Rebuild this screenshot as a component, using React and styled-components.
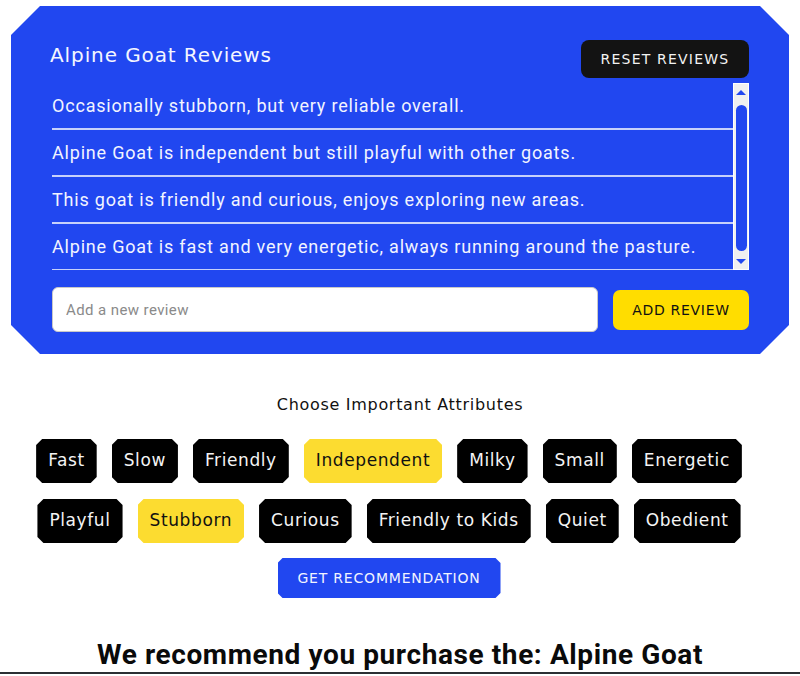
import React, { useState } from 'react';
import styled, { createGlobalStyle, css } from 'styled-components';

const GlobalStyle = createGlobalStyle`
  html, body {
    margin: 0;
    padding: 0;
    background: #fff;
  }
  body {
    font-family: Roboto, "Liberation Sans", sans-serif;
  }
`;

const blue = '#2147f0';
const pixelFont = `"DejaVu Sans", "Liberation Sans", sans-serif`;

const chamfer = (n) => css`
  clip-path: polygon(
    ${n}px 0, calc(100% - ${n}px) 0, 100% ${n}px, 100% calc(100% - ${n}px),
    calc(100% - ${n}px) 100%, ${n}px 100%, 0 calc(100% - ${n}px), 0 ${n}px
  );
`;

const Page = styled.div`
  width: 800px;
  padding-top: 6px;
`;

const Panel = styled.section`
  margin: 0 11px;
  background: ${blue};
  padding: 34px 40px 22px 41px;
  ${chamfer(29)}
`;

const PanelHeader = styled.header`
  display: flex;
  justify-content: space-between;
  align-items: center;
  height: 38px;
`;

const PanelTitle = styled.h2`
  margin: -8px 0 0 -2px;
  font-family: ${pixelFont};
  font-size: 20px;
  font-weight: 400;
  letter-spacing: 0.9px;
  color: #f4f6ff;
`;

const DarkButton = styled.button`
  height: 38px;
  width: 168px;
  border: none;
  border-radius: 8px;
  background: #131313;
  color: #f2f2f2;
  font-family: ${pixelFont};
  font-size: 14px;
  letter-spacing: 1.2px;
  cursor: pointer;
`;

const ListFrame = styled.div`
  display: flex;
  height: 187px;
  margin-top: 5px;
  overflow: hidden;
`;

const ReviewList = styled.ul`
  flex: 1;
  list-style: none;
  margin: 0;
  padding: 0;
  overflow: hidden;
`;

const ReviewItem = styled.li`
  padding: 11px 0;
  line-height: 23px;
  font-size: 18px;
  letter-spacing: 0.8px;
  color: #f2f4ff;
  border-bottom: 2px solid rgba(255, 255, 255, 0.75);
  white-space: nowrap;
`;

const ScrollBar = styled.div`
  width: 16px;
  box-sizing: border-box;
  display: flex;
  flex-direction: column;
  align-items: center;
  background: #f0f0f0;
  border: 1px solid #fff;
  padding: 6px 0 5px;
  gap: 6px;
`;

const Arrow = styled.span`
  width: 0;
  height: 0;
  border-left: 5px solid transparent;
  border-right: 5px solid transparent;
  ${({ $down }) =>
    $down ? `border-top: 5px solid ${blue};` : `border-bottom: 5px solid ${blue};`}
`;

const Thumb = styled.div`
  flex: 1;
  width: 11px;
  margin: 4px 0 2px;
  border-radius: 6px;
  background: ${blue};
`;

const AddRow = styled.div`
  display: flex;
  align-items: center;
  gap: 15px;
  margin-top: 17px;
`;

const ReviewInput = styled.input`
  flex: 1;
  height: 45px;
  box-sizing: border-box;
  border: 1px solid #c8c8c8;
  border-radius: 6px;
  padding: 0 13px;
  font-family: Roboto, "Liberation Sans", sans-serif;
  font-size: 15px;
  letter-spacing: 0.4px;
  color: #222;
  outline: none;
  &::placeholder {
    color: #8a8a8a;
  }
`;

const YellowButton = styled.button`
  width: 136px;
  height: 40px;
  border: none;
  border-radius: 7px;
  background: #ffdd00;
  color: #111;
  font-family: ${pixelFont};
  font-size: 14px;
  letter-spacing: 0.7px;
  cursor: pointer;
`;

const Attributes = styled.section`
  display: flex;
  flex-direction: column;
  align-items: center;
  margin-top: 41px;
`;

const AttributesLabel = styled.p`
  margin: 0;
  font-family: ${pixelFont};
  font-size: 16px;
  line-height: 20px;
  letter-spacing: 0.7px;
  color: #111;
`;

const ChipGroup = styled.div`
  display: flex;
  flex-direction: column;
  align-items: center;
  padding-right: 22px;
`;

const Chips = styled.div`
  display: flex;
  flex-wrap: wrap;
  justify-content: center;
  gap: 16px 15px;
  width: 760px;
  margin-top: 24px;
`;

const Chip = styled.button`
  height: 44px;
  padding: 0 12px 2px;
  border: none;
  background: ${({ $active }) => ($active ? '#fcdc30' : '#000')};
  color: ${({ $active }) => ($active ? '#111' : '#f4f4f4')};
  font-family: ${pixelFont};
  font-size: 17px;
  letter-spacing: 0.6px;
  cursor: pointer;
  ${chamfer(6)}
`;

const BlueButton = styled.button`
  margin-top: 15px;
  height: 40px;
  width: 223px;
  border: none;
  background: ${blue};
  color: #f2f4ff;
  font-family: ${pixelFont};
  font-size: 14px;
  letter-spacing: 0.8px;
  cursor: pointer;
  ${chamfer(5)}
`;

const Result = styled.h1`
  margin: 40px 0 0;
  text-align: center;
  font-family: Roboto, "Liberation Sans", sans-serif;
  font-size: 28px;
  font-weight: 700;
  line-height: 34px;
  letter-spacing: 0.6px;
  color: #0a0a0a;
`;

const Divider = styled.hr`
  margin: 0;
  border: none;
  border-top: 2px solid #2b2f33;
`;

const initialReviews = [
  'Occasionally stubborn, but very reliable overall.',
  'Alpine Goat is independent but still playful with other goats.',
  'This goat is friendly and curious, enjoys exploring new areas.',
  'Alpine Goat is fast and very energetic, always running around the pasture.',
];

const attributes = [
  'Fast', 'Slow', 'Friendly', 'Independent', 'Milky', 'Small', 'Energetic',
  'Playful', 'Stubborn', 'Curious', 'Friendly to Kids', 'Quiet', 'Obedient',
];

export default function App() {
  const [reviews, setReviews] = useState(initialReviews);
  const [draft, setDraft] = useState('');
  const [picked, setPicked] = useState(['Independent', 'Stubborn']);

  const toggle = (name) =>
    setPicked((p) => (p.includes(name) ? p.filter((x) => x !== name) : [...p, name]));

  const addReview = () => {
    if (!draft.trim()) return;
    setReviews([draft.trim(), ...reviews]);
    setDraft('');
  };

  return (
    <Page>
      <GlobalStyle />
      <Panel>
        <PanelHeader>
          <PanelTitle>Alpine Goat Reviews</PanelTitle>
          <DarkButton onClick={() => setReviews(initialReviews)}>RESET REVIEWS</DarkButton>
        </PanelHeader>
        <ListFrame>
          <ReviewList>
            {reviews.map((r, i) => (
              <ReviewItem key={i}>{r}</ReviewItem>
            ))}
          </ReviewList>
          <ScrollBar>
            <Arrow />
            <Thumb />
            <Arrow $down />
          </ScrollBar>
        </ListFrame>
        <AddRow>
          <ReviewInput
            placeholder="Add a new review"
            value={draft}
            onChange={(e) => setDraft(e.target.value)}
          />
          <YellowButton onClick={addReview}>ADD REVIEW</YellowButton>
        </AddRow>
      </Panel>

      <Attributes>
        <AttributesLabel>Choose Important Attributes</AttributesLabel>
        <ChipGroup>
          <Chips>
            {attributes.map((a) => (
              <Chip key={a} $active={picked.includes(a)} onClick={() => toggle(a)}>
                {a}
              </Chip>
            ))}
          </Chips>
          <BlueButton>GET RECOMMENDATION</BlueButton>
        </ChipGroup>
      </Attributes>

      <Result>We recommend you purchase the: Alpine Goat</Result>
      <Divider />
    </Page>
  );
}
